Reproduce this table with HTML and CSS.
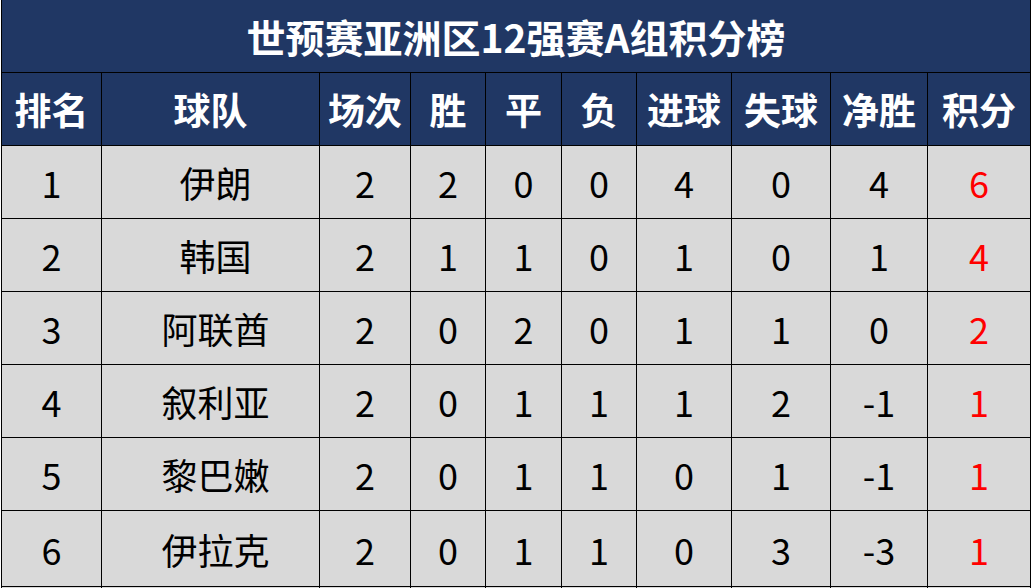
FILE: index.html
```html
<!DOCTYPE html>
<html lang="zh-CN">
<head>
<meta charset="utf-8">
<title>世预赛亚洲区12强赛A组积分榜</title>
<link rel="stylesheet" href="styles.css">
</head>
<body>
<div class="page">
  <div class="sheet">
    <div class="title">世预赛亚洲区12强赛A组积分榜</div>

    <div class="hd">排名</div>
    <div class="hd">球队</div>
    <div class="hd">场次</div>
    <div class="hd">胜</div>
    <div class="hd">平</div>
    <div class="hd">负</div>
    <div class="hd">进球</div>
    <div class="hd">失球</div>
    <div class="hd">净胜</div>
    <div class="hd">积分</div>

    <div class="cell">1</div><div class="cell team">伊朗</div><div class="cell">2</div><div class="cell">2</div><div class="cell">0</div><div class="cell">0</div><div class="cell">4</div><div class="cell">0</div><div class="cell">4</div><div class="cell pts">6</div>
    <div class="cell">2</div><div class="cell team">韩国</div><div class="cell">2</div><div class="cell">1</div><div class="cell">1</div><div class="cell">0</div><div class="cell">1</div><div class="cell">0</div><div class="cell">1</div><div class="cell pts">4</div>
    <div class="cell">3</div><div class="cell team">阿联酋</div><div class="cell">2</div><div class="cell">0</div><div class="cell">2</div><div class="cell">0</div><div class="cell">1</div><div class="cell">1</div><div class="cell">0</div><div class="cell pts">2</div>
    <div class="cell">4</div><div class="cell team">叙利亚</div><div class="cell">2</div><div class="cell">0</div><div class="cell">1</div><div class="cell">1</div><div class="cell">1</div><div class="cell">2</div><div class="cell">-1</div><div class="cell pts">1</div>
    <div class="cell">5</div><div class="cell team">黎巴嫩</div><div class="cell">2</div><div class="cell">0</div><div class="cell">1</div><div class="cell">1</div><div class="cell">0</div><div class="cell">1</div><div class="cell">-1</div><div class="cell pts">1</div>
    <div class="cell">6</div><div class="cell team">伊拉克</div><div class="cell">2</div><div class="cell">0</div><div class="cell">1</div><div class="cell">1</div><div class="cell">0</div><div class="cell">3</div><div class="cell">-3</div><div class="cell pts">1</div>

    <div class="cell"></div><div class="cell"></div><div class="cell"></div><div class="cell"></div><div class="cell"></div><div class="cell"></div><div class="cell"></div><div class="cell"></div><div class="cell"></div><div class="cell"></div>
  </div>
</div>
</body>
</html>
```

FILE: styles.css
```css
html, body {
  margin: 0;
  padding: 0;
  background: #ffffff;
}

body {
  font-family: "Noto Sans CJK SC", "Noto Sans", sans-serif;
  overflow: hidden;
}

.page {
  padding-left: 1px;
  width: 1034px;
  height: 588px;
  overflow: hidden;
}

.sheet {
  display: grid;
  width: 1030px;
  grid-template-columns: 99px 217px 90px 74px 75px 74px 94px 98px 96px 102px;
  grid-template-rows: 72px 72px 72px 72px 72px 72px 72px 75px 40px;
  gap: 1px;
  background: #000000;
  border-left: 1px solid #000000;
  border-right: 1px solid #000000;
  box-sizing: border-box;
}

.title {
  grid-column: 1 / -1;
  background: #203764;
  color: #ffffff;
  font-weight: 700;
  font-size: 39px;
  display: flex;
  align-items: center;
  justify-content: center;
}

.hd {
  background: #203764;
  color: #ffffff;
  font-weight: 700;
  font-size: 37px;
  display: flex;
  align-items: center;
  justify-content: center;
  white-space: nowrap;
}

.cell {
  background: #d9d9d9;
  color: #000000;
  font-size: 36px;
  display: flex;
  align-items: center;
  justify-content: center;
  white-space: nowrap;
}

.team {
  padding-left: 10px;
}

.pts {
  color: #ff0000;
}
```
